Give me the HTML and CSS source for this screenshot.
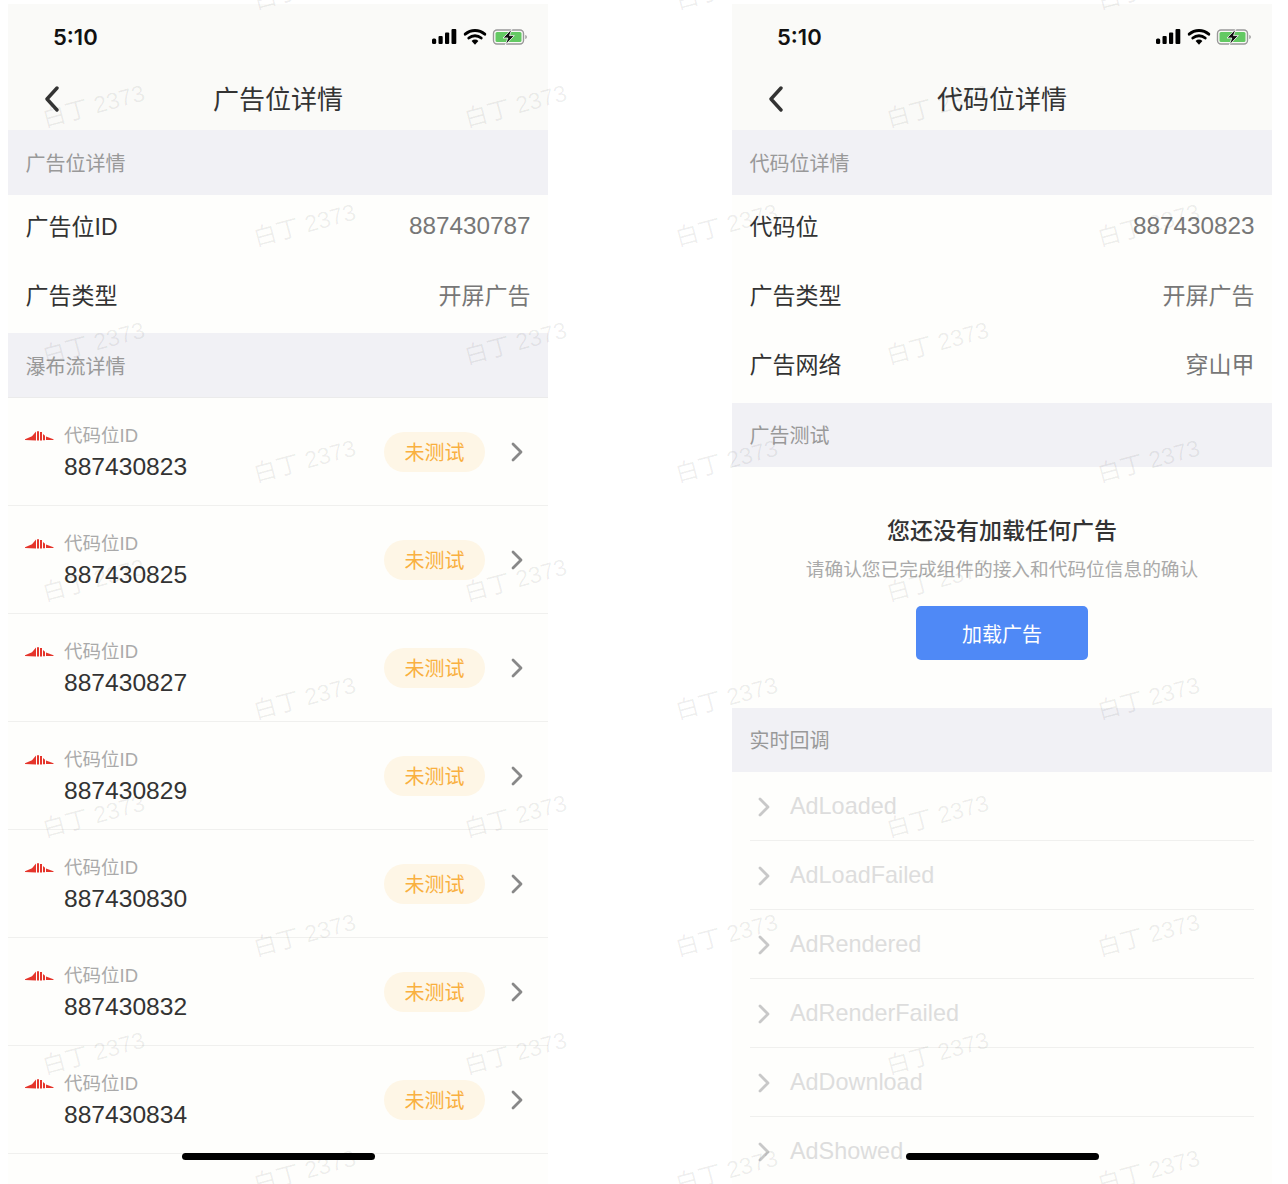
FILE: index.html
```html
<!DOCTYPE html>
<html lang="zh-CN">
<head>
<meta charset="utf-8">
<title>广告位详情</title>
<link rel="stylesheet" href="styles.css">
</head>
<body>
<svg class="defs" width="0" height="0" aria-hidden="true">
  <symbol id="logo" viewBox="0 0 29 10">
    <path d="M0 8.300 7 5.200 11 .4V9.500L0 8.900Z" fill="#e5352b"/>
    <path d="M12 .2H14V9.500H12ZM15 1H17V9.500H15ZM18 3 20 4.800V9.200H18Z" fill="#e5352b"/>
    <path d="M21 5.600 28.500 8.300V9L21 9.100Z" fill="#e5352b"/>
  </symbol>
  <symbol id="chev" viewBox="0 0 12 20">
    <path d="M2 2l8 8-8 8" fill="none" stroke="currentColor" stroke-width="2.800" stroke-linecap="round" stroke-linejoin="round"/>
  </symbol>
  <symbol id="back" viewBox="0 0 16 26">
    <path d="M13 2 3 13l10 11" fill="none" stroke="currentColor" stroke-width="3.400" stroke-linecap="round" stroke-linejoin="round"/>
  </symbol>
  <symbol id="status" viewBox="0 0 96 18">
    <rect x="0" y="10.500" width="4.200" height="5.500" rx="1.500" fill="#000"/>
    <rect x="6.500" y="8" width="4.200" height="8" rx="1" fill="#000"/>
    <rect x="13" y="4.500" width="4.200" height="11.500" rx="1" fill="#000"/>
    <rect x="19.500" y="1" width="4.800" height="15" rx="1" fill="#000"/>
    <path d="M33.200 6.200a14.800 14.800 0 0 1 19.600 0" fill="none" stroke="#000" stroke-width="2.900" stroke-linecap="round"/>
    <path d="M36.800 10a9.600 9.600 0 0 1 12.400 0" fill="none" stroke="#000" stroke-width="2.900" stroke-linecap="round"/>
    <path d="M43 16.800l-3.400-3.800a4.800 4.800 0 0 1 6.800 0Z" fill="#000"/>
    <rect x="61.500" y="2" width="30" height="14" rx="3.500" fill="none" stroke="#999" stroke-width="1.400"/>
    <rect x="63.500" y="4" width="26" height="10" rx="1.500" fill="#63c963"/>
    <path d="M93.300 7v4c1-.3 1.500-1 1.500-2s-.5-1.700-1.500-2Z" fill="#999"/>
    <path d="M80 .8 71 10h4.800l-2.500 7 9-9.400h-4.800Z" fill="#111" stroke="#fff" stroke-width=".8"/>
  </symbol>
</svg>

<main class="phone">
  <header class="top">
    <div class="statusbar"><span class="time">5:10</span><svg class="status-ico"><use href="#status"/></svg></div>
    <div class="nav"><svg class="back"><use href="#back"/></svg><h1>广告位详情</h1></div>
  </header>
  <div class="section">广告位详情</div>
  <div class="kv"><span>广告位ID</span><span class="val num">887430787</span></div>
  <div class="kv"><span>广告类型</span><span class="val">开屏广告</span></div>
  <div class="section sec-line">瀑布流详情</div>
  <div class="item"><svg class="logo"><use href="#logo"/></svg><div class="id"><span>代码位ID</span><b>887430823</b></div><span class="badge">未测试</span><svg class="chev"><use href="#chev"/></svg></div>
  <div class="item"><svg class="logo"><use href="#logo"/></svg><div class="id"><span>代码位ID</span><b>887430825</b></div><span class="badge">未测试</span><svg class="chev"><use href="#chev"/></svg></div>
  <div class="item"><svg class="logo"><use href="#logo"/></svg><div class="id"><span>代码位ID</span><b>887430827</b></div><span class="badge">未测试</span><svg class="chev"><use href="#chev"/></svg></div>
  <div class="item"><svg class="logo"><use href="#logo"/></svg><div class="id"><span>代码位ID</span><b>887430829</b></div><span class="badge">未测试</span><svg class="chev"><use href="#chev"/></svg></div>
  <div class="item"><svg class="logo"><use href="#logo"/></svg><div class="id"><span>代码位ID</span><b>887430830</b></div><span class="badge">未测试</span><svg class="chev"><use href="#chev"/></svg></div>
  <div class="item"><svg class="logo"><use href="#logo"/></svg><div class="id"><span>代码位ID</span><b>887430832</b></div><span class="badge">未测试</span><svg class="chev"><use href="#chev"/></svg></div>
  <div class="item"><svg class="logo"><use href="#logo"/></svg><div class="id"><span>代码位ID</span><b>887430834</b></div><span class="badge">未测试</span><svg class="chev"><use href="#chev"/></svg></div>
  <div class="home"></div>
</main>

<main class="phone">
  <header class="top">
    <div class="statusbar"><span class="time">5:10</span><svg class="status-ico"><use href="#status"/></svg></div>
    <div class="nav"><svg class="back"><use href="#back"/></svg><h1>代码位详情</h1></div>
  </header>
  <div class="section">代码位详情</div>
  <div class="kv"><span>代码位</span><span class="val num">887430823</span></div>
  <div class="kv"><span>广告类型</span><span class="val">开屏广告</span></div>
  <div class="kv"><span>广告网络</span><span class="val">穿山甲</span></div>
  <div class="section sec-tight">广告测试</div>
  <div class="empty">
    <h2>您还没有加载任何广告</h2>
    <p>请确认您已完成组件的接入和代码位信息的确认</p>
    <button class="load">加载广告</button>
  </div>
  <div class="section sec-cb">实时回调</div>
  <div class="cb"><svg class="chev"><use href="#chev"/></svg><span>AdLoaded</span></div>
  <div class="cb"><svg class="chev"><use href="#chev"/></svg><span>AdLoadFailed</span></div>
  <div class="cb"><svg class="chev"><use href="#chev"/></svg><span>AdRendered</span></div>
  <div class="cb"><svg class="chev"><use href="#chev"/></svg><span>AdRenderFailed</span></div>
  <div class="cb"><svg class="chev"><use href="#chev"/></svg><span>AdDownload</span></div>
  <div class="cb"><svg class="chev"><use href="#chev"/></svg><span>AdShowed</span></div>
  <div class="home"></div>
</main>

<div class="marks" aria-hidden="true">
  <div class="mrow"><span>白丁 2373</span><span>白丁 2373</span><span>白丁 2373</span></div>
  <div class="mrow"><span>白丁 2373</span><span>白丁 2373</span><span>白丁 2373</span></div>
  <div class="mrow"><span>白丁 2373</span><span>白丁 2373</span><span>白丁 2373</span></div>
  <div class="mrow"><span>白丁 2373</span><span>白丁 2373</span><span>白丁 2373</span></div>
  <div class="mrow"><span>白丁 2373</span><span>白丁 2373</span><span>白丁 2373</span></div>
  <div class="mrow"><span>白丁 2373</span><span>白丁 2373</span><span>白丁 2373</span></div>
  <div class="mrow"><span>白丁 2373</span><span>白丁 2373</span><span>白丁 2373</span></div>
  <div class="mrow"><span>白丁 2373</span><span>白丁 2373</span><span>白丁 2373</span></div>
  <div class="mrow"><span>白丁 2373</span><span>白丁 2373</span><span>白丁 2373</span></div>
  <div class="mrow"><span>白丁 2373</span><span>白丁 2373</span><span>白丁 2373</span></div>
  <div class="mrow"><span>白丁 2373</span><span>白丁 2373</span><span>白丁 2373</span></div>
</div>
</body>
</html>
```
FILE: styles.css
```css
* { box-sizing: border-box; }
html, body { margin: 0; height: 1184px; overflow: hidden; }
body {
  position: relative;
  display: flex;
  gap: 184px;
  padding: 4px 8px 0;
  background: #fff;
  font-family: "Liberation Sans", "Noto Sans CJK SC", sans-serif;
  color: #333;
}
.defs { position: absolute; }

.phone {
  position: relative;
  width: 540px;
  height: 1180px;
  overflow: hidden;
  background: #fefefc;
  display: flex;
  flex-direction: column;
}
.top { background: #fafaf8; height: 126px; flex: none; }
.statusbar {
  height: 62px;
  padding: 0 20px 0 45px;
  display: flex;
  align-items: center;
  justify-content: space-between;
}
.time { font: 600 22px "Inter", sans-serif; color: #111; margin-top: 4px; }
.status-ico { width: 96px; height: 18px; margin-top: 4px; }
.nav { height: 64px; position: relative; display: flex; align-items: center; justify-content: center; padding-bottom: 2px; }
.nav h1 { margin: 0; font-size: 26px; font-weight: 400; color: #333; }
.back { position: absolute; left: 36px; top: 20px; width: 16px; height: 26px; color: #333; }

.section {
  flex: none;
  height: 65px;
  padding-left: 17.500px;
  display: flex;
  align-items: center;
  background: #f1f1f5;
  color: #999;
  font-size: 20px;
}
.sec-line { height: 65px; border-bottom: 1px solid #ebebeb; }
.sec-tight { height: 64px; margin-top: 1px; padding-bottom: 2px; }
.sec-cb { height: 64px; padding-bottom: 2px; }

.kv {
  flex: none;
  height: 69px;
  padding: 0 17.500px 9px;
  display: flex;
  align-items: center;
  justify-content: space-between;
  font-size: 23px;
  color: #333;
}
.val { color: #777; font-size: 23px; }
.num { font-size: 24.300px; margin-top: 2px; }

.item {
  flex: none;
  height: 108px;
  padding: 0 25px 0 17px;
  display: flex;
  align-items: center;
  border-bottom: 1px solid #f0f0ee;
  position: relative;
}
.logo { width: 29px; height: 10px; align-self: flex-start; margin-top: 33px; flex: none; }
.id { margin-left: 10px; display: flex; flex-direction: column; flex: 1; }
.id span { font-size: 18.500px; line-height: 26px; color: #aaa; margin-top: 4px; }
.id b { font-weight: 400; font-size: 24.600px; line-height: 36px; color: #333; margin-top: 0; }
.badge {
  width: 101px;
  height: 40px;
  margin-right: 26px;
  border-radius: 20px;
  background: #fef6e6;
  color: #f9b040;
  font-size: 20px;
  display: flex;
  align-items: center;
  justify-content: center;
}
.chev { width: 12px; height: 20px; color: #888; flex: none; }

.empty {
  flex: none;
  height: 241px;
  display: flex;
  flex-direction: column;
  align-items: center;
  padding-top: 48px;
}
.empty h2 { margin: 0; font-size: 23px; line-height: 32px; font-weight: 500; color: #333; }
.empty p { margin: 9px 0 0; font-size: 18.700px; line-height: 28px; color: #aaa; }
.load {
  margin-top: 22px;
  width: 172px;
  height: 54px;
  border: 0;
  border-radius: 5px;
  background: #4f89f6;
  color: #fff;
  font: inherit;
  font-size: 20px;
}

.cb {
  flex: none;
  height: 69px;
  margin: 0 18px;
  padding-left: 8px;
  padding-top: 1px;
  display: flex;
  align-items: center;
  border-bottom: 1px solid #f0f0ee;
  font-size: 23.400px;
  color: #ddd;
}
.cb .chev { color: #c8c8c8; margin-right: 20px; }

.home {
  position: absolute;
  left: 174px;
  top: 1149px;
  width: 193px;
  height: 7px;
  border-radius: 4px;
  background: #000;
}

.marks {
  position: absolute;
  left: -118px;
  top: -73px;
  width: 1500px;
  pointer-events: none;
}
.mrow { height: 118.300px; display: flex; align-items: center; }
.mrow:nth-child(odd) { padding-left: 211px; }
.mrow span {
  flex: none;
  width: 422px;
  text-align: center;
  font-size: 23.300px;
  color: rgba(0, 0, 0, .065);
  transform: rotate(-15deg);
  white-space: pre;
}
```
